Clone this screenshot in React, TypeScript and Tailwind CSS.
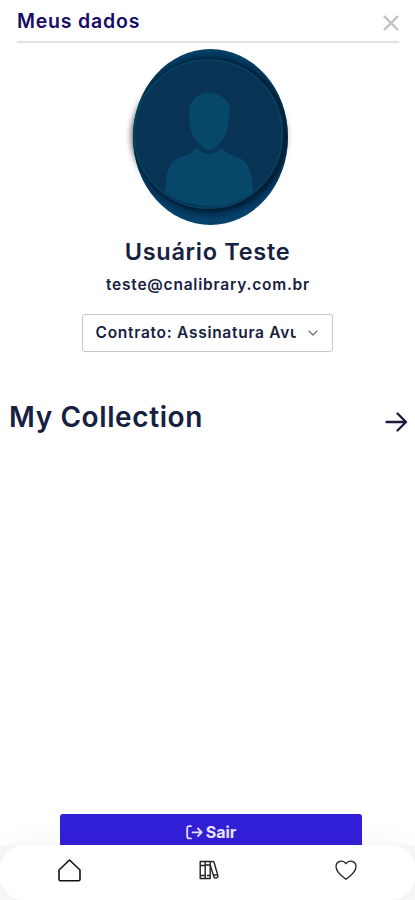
import { ChevronDown } from 'lucide-react';

function Avatar() {
  return (
    <svg width="190" height="186" viewBox="0 0 190 186" className="ml-[5px] block" aria-label="Avatar">
      <defs>
        <clipPath id="avatar-outer">
          <ellipse cx="95.5" cy="94" rx="77.5" ry="88" />
        </clipPath>
        <clipPath id="avatar-inner">
          <circle cx="93.8" cy="91" r="73" />
        </clipPath>
        <filter id="avatar-shadow" x="-20%" y="-20%" width="140%" height="140%">
          <feGaussianBlur stdDeviation="3.5" />
        </filter>
      </defs>
      <ellipse cx="90" cy="93" rx="73" ry="66" fill="#000" opacity="0.7" filter="url(#avatar-shadow)" />
      <ellipse cx="97" cy="93" rx="75" ry="58" fill="#000" opacity="0.3" filter="url(#avatar-shadow)" />
      <ellipse cx="95.5" cy="94" rx="77.5" ry="88" fill="#05426b" />
      <g clipPath="url(#avatar-outer)">
        <circle cx="95" cy="92" r="78" fill="#00142a" filter="url(#avatar-shadow)" />
      </g>
      <circle cx="93.3" cy="91" r="74" fill="#093355" stroke="#05405f" strokeWidth="2" />
      <g clipPath="url(#avatar-inner)" fill="#07476a">
        <path d="M94 50c-12 0-20 8-20 20 0 17 4 25 11 31 3 3 6 6 9 6s7-3 10-6c7-7 10-16 10-29 2-7 1-12-3-14-3-5-9-8-17-8Z" />
        <path d="M81 105c5 3 8 6 13 6s9-3 13-6c4 5 9 7 15 9 12 4 14 15 16 31v5c-10 9-24 13-42 13s-35-5-46-14c1-19 3-31 16-35 6-2 11-4 15-9Z" />
      </g>
    </svg>
  );
}

function CloseIcon() {
  return (
    <svg width="18" height="18" viewBox="0 0 18 18" fill="none" stroke="#bfc0c2" strokeWidth="2.4">
      <path d="m2 2 14 14M16 2 2 16" />
    </svg>
  );
}

function ArrowIcon() {
  return (
    <svg width="24" height="22" viewBox="0 0 24 22" fill="none" stroke="#1b1b3b" strokeWidth="2.3" strokeLinecap="round" strokeLinejoin="round">
      <path d="M2.5 11H22M13.5 2.5 22 11l-8.5 8.5" />
    </svg>
  );
}

function LogoutIcon() {
  return (
    <svg width="17" height="15" viewBox="0 0 17 15" fill="none" stroke="#e4e1ff" strokeWidth="1.8" strokeLinecap="round" strokeLinejoin="round">
      <path d="M5 1.2H3.2c-1.3 0-2 .7-2 2v8.2c0 1.3.7 2 2 2H5M6.5 7.3h9M12 3.5l3.7 3.8L12 11" />
    </svg>
  );
}

function HomeIcon() {
  return (
    <svg width="24" height="23" viewBox="0 0 24 23" fill="none" stroke="#111" strokeWidth="1.6" strokeLinejoin="round">
      <path d="M1 11 11.5 1 22 11v9.3c0 1-.6 1.5-1.5 1.5h-18c-.9 0-1.5-.5-1.5-1.5Z" />
    </svg>
  );
}

function BooksIcon() {
  return (
    <svg width="20" height="20" viewBox="0 0 20 20" fill="none" stroke="#222" strokeWidth="1.4" strokeLinejoin="round">
      <path d="M1.2 1.5h5v17h-5ZM6.2 1.5h5v17h-5ZM1.2 5.5h5M1.2 15.5h5M6.2 5h5M8 15.5h3.2" />
      <path d="m11.2 1.8 2.8-.4c.6 0 .9.3 1 .8l3.9 13.4c.4 2.2-2.9 3.6-4 1.3L11.2 5M14.5 15.2l4-.6" />
    </svg>
  );
}

function HeartIcon() {
  return (
    <svg width="24" height="22" viewBox="0 0 24 22" fill="none" stroke="#222" strokeWidth="1.3" strokeLinejoin="round">
      <path d="M12 20.3C8.5 17.8 2 13.2 2 7.8 2 2 9 .3 12 4.7c3-4.4 10-2.7 10 3.1 0 5.4-6.5 10-10 12.5Z" />
    </svg>
  );
}

export default function App() {
  return (
    <div className="flex h-[900px] w-full flex-col overflow-hidden bg-white font-['Inter',sans-serif] font-semibold text-[#17213f]">
      <header className="mr-4 ml-[17px] flex h-[42.5px] shrink-0 items-start justify-between border-b-2 border-[#e2e2e2]">
        <h1 className="mt-[6.5px] text-[19.5px] leading-7 tracking-[0.8px] whitespace-nowrap text-[#160c66]">Meus dados</h1>
        <button type="button" aria-label="Fechar" className="mt-[14px] -mr-px">
          <CloseIcon />
        </button>
      </header>

      <section className="flex flex-col items-center">
        <Avatar />
        <h2 className="mt-[7px] text-[23.5px] leading-8 tracking-[0.7px] whitespace-nowrap">Usuário Teste</h2>
        <p className="mt-[5px] ml-px text-[15.5px] leading-6 tracking-[0.78px] whitespace-nowrap">teste@cnalibrary.com.br</p>
        <button type="button" className="mt-[17px] flex h-[38px] w-[251px] items-center rounded-[3px] border border-[#c4c6ca] pl-[12.5px] text-left">
          <span className="w-[200px] overflow-hidden pt-px text-[15.5px] leading-6 tracking-[0.72px] whitespace-nowrap">Contrato: Assinatura Avulsa</span>
          <ChevronDown className="ml-[9px] text-[#6e7178]" size={16} strokeWidth={1.8} />
        </button>
      </section>

      <section className="mt-[45px] flex items-center justify-between pr-[7px] pl-[9px]">
        <h2 className="text-[28px] leading-10 tracking-[0.6px] whitespace-nowrap">My Collection</h2>
        <span className="mt-[10px]">
          <ArrowIcon />
        </span>
      </section>

      <div className="mt-auto">
        <button type="button" className="ml-[60px] flex h-[31px] w-[302px] items-center justify-center gap-[3px] rounded-t-[3px] bg-[#321fd8] pt-[5px] text-[16px] font-bold text-[#e9e6ff]">
          <LogoutIcon />
          Sair
        </button>
      </div>
      <div className="shrink-0 bg-[#f9f9f9]">
        <nav className="flex h-[55px] items-start justify-between rounded-[24px] bg-white pr-[57px] pl-[58px] pt-[14px] shadow-[0_0_30px_rgba(0,0,0,0.05)]">
          <HomeIcon />
          <span className="mt-px ml-px">
            <BooksIcon />
          </span>
          <HeartIcon />
        </nav>
      </div>
    </div>
  );
}
